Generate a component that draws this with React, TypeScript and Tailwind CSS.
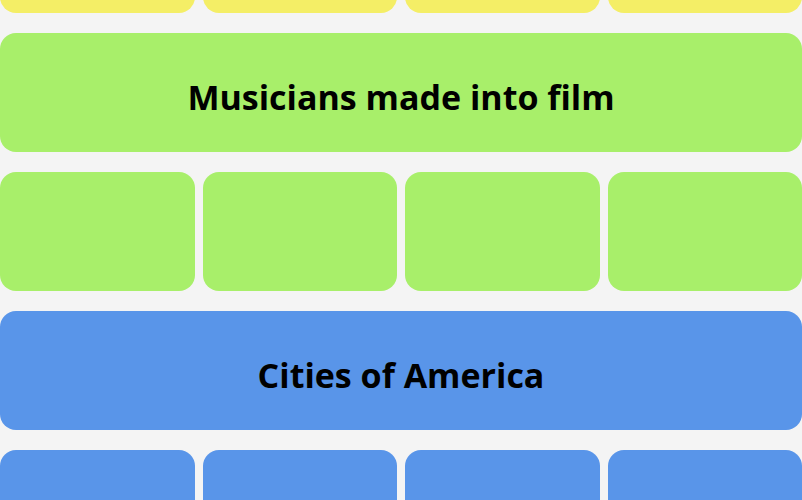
import React from "react";

type Group = {
  title: string;
  color: string;
};

const groups: Group[] = [
  { title: "Musicians made into film", color: "bg-[#a8ef6a]" },
  { title: "Cities of America", color: "bg-[#5995e9]" },
];

const Tiles = ({ color }: { color: string }) => (
  <div className="grid grid-cols-4 gap-2">
    {[0, 1, 2, 3].map((i) => (
      <div key={i} className={`h-[119px] rounded-2xl ${color}`} />
    ))}
  </div>
);

const App = () => {
  return (
    <div className="h-[500px] w-full overflow-hidden bg-[#f4f4f4] font-['Open_Sans',sans-serif]">
      {/* board is scrolled, only the last yellow row shows */}
      <div className="-mt-[106px] flex flex-col gap-5">
        <Tiles color="bg-[#f4ee66]" />
        {groups.map((group) => (
          <React.Fragment key={group.title}>
            <div
              className={`flex h-[119px] items-center justify-center rounded-2xl ${group.color}`}
            >
              <span className="pt-2 text-[34px] font-bold leading-none text-black [font-variant-ligatures:none]">
                {group.title}
              </span>
            </div>
            <Tiles color={group.color} />
          </React.Fragment>
        ))}
      </div>
    </div>
  );
};

export default App;
